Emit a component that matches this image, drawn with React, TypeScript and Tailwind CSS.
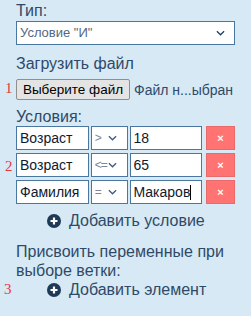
import { useState } from "react"

interface Condition {
  field: string
  op: string
  value: string
}

const initialConditions: Condition[] = [
  { field: "Возраст", op: ">", value: "18" },
  { field: "Возраст", op: "<=", value: "65" },
  { field: "Фамилия", op: "=", value: "Макаров" },
]

function Chevron({ className }: { className?: string }) {
  return (
    <svg viewBox="0 0 10 6" className={className} fill="none">
      <path d="M1 1l4 4 4-4" stroke="currentColor" strokeWidth="1.4" />
    </svg>
  )
}

function PlusCircle() {
  return (
    <svg viewBox="0 0 14 14" className="w-[14px] h-[14px] shrink-0">
      <circle cx="7" cy="7" r="7" fill="#1e3a56" />
      <path d="M7 3.5v7M3.5 7h7" stroke="#fff" strokeWidth="2.2" />
    </svg>
  )
}

function Marker({ n, className }: { n: string; className: string }) {
  return (
    <span
      className={`absolute text-[15px] leading-none text-[#e8383d] ${className}`}
      style={{ fontFamily: '"Liberation Serif", serif' }}
    >
      {n}
    </span>
  )
}

export default function App() {
  const [conditions] = useState(initialConditions)

  return (
    <div
      className="relative w-[251px] h-[316px] bg-[#d6e9f5] text-[#2f4a68] px-4 overflow-hidden"
      style={{ fontFamily: '"Liberation Sans", Arial, sans-serif' }}
    >
      {/* Type */}
      <div className="pt-[1px] text-[16px] leading-[20px]">Тип:</div>
      <div className="w-[219px] h-[24px] bg-white border border-[#4a77a0] flex items-center justify-between pl-[3px] pr-[9px]">
        <span className="text-[13px] text-[#55677e]">Условие "И"</span>
        <Chevron className="w-[9px] h-[6px] text-[#1e3f66]" />
      </div>

      {/* File */}
      <div className="mt-[9px] text-[16px] leading-[20px]">Загрузить файл</div>
      <div className="mt-[5px] flex items-center gap-[4px] h-[21px]">
        <button className="h-[21px] w-[114px] border border-[#8f8f8f] rounded-[2px] bg-[#e4e4e4] text-[13.5px] text-black leading-none">
          Выберите файл
        </button>
        <span className="text-[14px] leading-none">Файл н...ыбран</span>
      </div>

      {/* Conditions */}
      <div className="mt-[7px] text-[16px] leading-[19px]">Условия:</div>
      <div className="flex flex-col gap-[3px]">
        {conditions.map((c, i) => (
          <div key={i} className="flex h-[24px]">
            <div className="w-[73px] bg-white border border-[#4a77a0] flex items-center pl-[3px] text-[14px] text-[#0f1a2e]">
              {c.field}
            </div>
            <div className="ml-[2px] w-[37px] bg-white border border-[#4a77a0] flex items-center pl-[3px] pr-[10px] justify-between overflow-hidden">
              <span className="text-[12px] text-[#7c8796] tracking-[-1px]">{c.op}</span>
              <Chevron className="w-[9px] h-[6px] text-[#3d5a80]" />
            </div>
            <div className="ml-[2px] w-[73px] bg-white border border-[#4a77a0] flex items-center pl-[3px] text-[14px] text-[#0f1a2e]">
              {c.value}
              {i === 2 && <span className="w-[1px] h-[15px] bg-black" />}
            </div>
            <button className="ml-[4px] w-[29px] bg-[#ff7373] border border-[#e86a6a] text-white text-[11px] font-bold leading-none">
              ×
            </button>
          </div>
        ))}
      </div>

      <button className="mt-[7px] ml-[31px] flex items-center gap-[8px] text-[16px] leading-[20px]">
        <PlusCircle />
        Добавить условие
      </button>

      {/* Variables */}
      <div className="mt-[11px] text-[16px] leading-[19px]">
        Присвоить переменные при выборе ветки:
      </div>
      <button className="ml-[31px] flex items-center gap-[8px] text-[16px] leading-[20px]">
        <PlusCircle />
        Добавить элемент
      </button>

      <Marker n="1" className="left-[5px] top-[81px]" />
      <Marker n="2" className="left-[5px] top-[159px]" />
      <Marker n="3" className="left-[4px] top-[282px]" />
    </div>
  )
}
